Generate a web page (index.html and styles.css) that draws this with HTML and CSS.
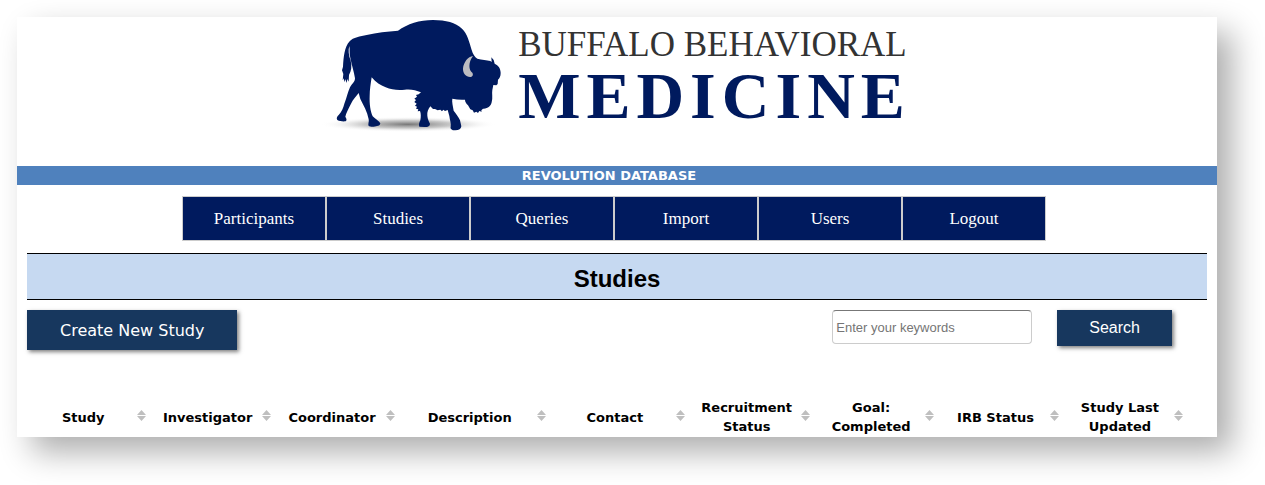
FILE: index.html
```html
<!DOCTYPE html>
<html lang="en">
<head>
    <meta charset="UTF-8">
    <meta name="viewport" content="width=device-width, initial-scale=1.0">
    <title>Revolution Database - Studies</title>
    <link rel="stylesheet" href="styles.css">
</head>
<body>
    <div class="page">
        <header class="logo">
            <svg class="bison" viewBox="0 21 600 360" aria-hidden="true">
                <defs>
                    <radialGradient id="ground">
                        <stop offset="0" stop-color="#777"/>
                        <stop offset="0.5" stop-color="#bbb" stop-opacity="0.8"/>
                        <stop offset="1" stop-color="#fff" stop-opacity="0"/>
                    </radialGradient>
                </defs>
                <ellipse cx="270" cy="343" rx="265" ry="23" fill="url(#ground)"/>
                <path fill="#001a5e" d="M240 62 C268 42 305 30 345 30 C385 30 412 38 432 56 C448 71 454 96 461 120 C465 133 470 141 478 146 C492 149 506 150 517 153 L521 156 L520 142 L527 150 L530 161 C541 166 548 175 548 189 C548 199 545 205 540 209 L539 222 L535 226 L526 225 L523 240 C521 251 525 263 521 277 C519 288 509 297 495 296 L490 301 L491 305 L484 303 L480 309 L475 305 L468 308 L464 301 L457 298 L450 286 C444 280 441 275 441 269 C429 270 415 269 403 266 C401 275 405 289 407 302 C415 313 422 321 426 331 L430 349 C429 357 423 361 412 361 C401 361 396 356 398 350 C400 341 395 329 394 318 L389 300 L381 303 L376 299 L372 304 L367 299 L359 301 L351 297 L345 297 L337 289 C330 298 327 306 328 317 C329 327 333 335 336 341 C336 348 331 351 320 351 L304 350 C301 344 304 337 307 331 C309 321 309 310 306 303 L299 304 L301 298 L294 296 L297 290 L291 287 L296 281 L289 276 L294 270 L289 266 L297 260 L294 255 L302 253 L309 247 C294 240 278 237 260 239 C239 241 220 239 203 232 C187 226 174 217 161 202 C158 222 155 239 155 258 C154 281 157 304 164 319 C171 327 183 332 187 340 C186 346 183 348 177 348 C170 351 157 351 152 348 C149 343 154 335 152 328 C148 305 136 285 127 267 L122 249 C113 260 105 269 99 281 C91 297 84 309 82 320 C86 326 87 330 83 334 C75 335 65 334 58 330 C54 325 58 319 62 315 C71 304 76 294 79 281 C87 262 89 246 96 232 C102 220 111 217 111 205 C108 184 101 166 97 144 C93 130 96 117 94 108 C90 120 92 136 98 152 C102 169 100 182 93 195 L92 215 L88 207 L86 219 L82 208 L78 217 L78 205 L74 211 L76 192 L72 181 L75 170 C77 141 79 111 95 94 C105 82 127 79 146 75 C177 68 207 64 240 62 Z"/>
                <path fill="#bcbcc0" d="M465 138 C450 139 437 157 435 175 C434 190 444 201 456 201 C463 201 467 195 463 188 C452 181 450 158 465 138 Z"/>
            </svg>
            <div class="logo-text">
                <span class="logo-top">BUFFALO BEHAVIORAL</span>
                <span class="logo-bottom">MEDICINE</span>
            </div>
        </header>

        <div class="banner">REVOLUTION DATABASE</div>

        <nav class="menu">
            <a href="#">Participants</a>
            <a href="#">Studies</a>
            <a href="#">Queries</a>
            <a href="#">Import</a>
            <a href="#">Users</a>
            <a href="#">Logout</a>
        </nav>

        <main class="content">
            <h1>Studies</h1>

            <div class="toolbar">
                <button type="button" class="btn btn-create">Create New Study</button>
                <form class="search">
                    <input type="text" class="keywords" placeholder="Enter your keywords" aria-label="Keywords">
                    <button type="submit" class="btn btn-search">Search</button>
                </form>
            </div>

            <svg width="0" height="0" class="sprite" aria-hidden="true">
                <symbol id="sort" viewBox="0 0 9 11">
                    <path d="M4.5 0 L9 5 H0 Z M0 6 H9 L4.5 11 Z"/>
                </symbol>
            </svg>

            <table class="studies">
                <colgroup>
                    <col span="3">
                    <col class="col-description">
                    <col class="col-contact">
                    <col span="4">
                </colgroup>
                <thead>
                    <tr>
                        <th><div class="head"><span>Study</span><svg><use href="#sort"/></svg></div></th>
                        <th><div class="head"><span>Investigator</span><svg><use href="#sort"/></svg></div></th>
                        <th><div class="head"><span>Coordinator</span><svg><use href="#sort"/></svg></div></th>
                        <th><div class="head"><span>Description</span><svg><use href="#sort"/></svg></div></th>
                        <th><div class="head"><span>Contact</span><svg><use href="#sort"/></svg></div></th>
                        <th><div class="head"><span>Recruitment Status</span><svg><use href="#sort"/></svg></div></th>
                        <th><div class="head"><span>Goal: Completed</span><svg><use href="#sort"/></svg></div></th>
                        <th><div class="head"><span>IRB Status</span><svg><use href="#sort"/></svg></div></th>
                        <th><div class="head"><span>Study Last Updated</span><svg><use href="#sort"/></svg></div></th>
                    </tr>
                </thead>
            </table>
        </main>
    </div>
</body>
</html>
```
FILE: styles.css
```css
* {
    box-sizing: border-box;
}
body {
    margin: 0;
    padding: 17px 48px 48px 17px;
    background: #fff;
    color: #000;
    font-family: "DejaVu Sans", Verdana, sans-serif;
    font-size: 13px;
}
.page {
    padding-bottom: 1px;
    background: #fff;
    box-shadow: 15px 15px 30px rgba(0, 0, 0, 0.32);
}

/* logo */
.logo {
    display: flex;
    justify-content: center;
    padding: 0 5px 29px 0;
}
.bison {
    width: 200px;
    height: 120px;
}
.logo-text {
    display: flex;
    flex-direction: column;
    padding-top: 9px;
    font-family: "Liberation Serif", "Times New Roman", serif;
}
.logo-top {
    font-size: 35px;
    line-height: 38px;
    color: #333;
}
.logo-bottom {
    font-size: 66px;
    line-height: 64px;
    font-weight: bold;
    letter-spacing: 6px;
    color: #001a5e;
}

.banner {
    padding-right: 16px;
    background: #4f81bd;
    color: #fff;
    font-weight: bold;
    line-height: 19px;
    text-align: center;
}

/* main menu */
.menu {
    display: flex;
    justify-content: center;
    padding: 11px 6px 12px 0;
}
.menu a {
    width: 144px;
    border: 1px solid #ccc;
    background: #001a5e;
    color: #fff;
    font-family: "Liberation Serif", "Times New Roman", serif;
    font-size: 17px;
    line-height: 43px;
    text-align: center;
    text-decoration: none;
}

.content {
    padding: 0 10px;
}
h1 {
    margin: 0 0 10px;
    padding-top: 5px;
    border-top: 1px solid #000;
    border-bottom: 1px solid #000;
    background: #c6d9f1;
    font-family: "Liberation Sans", Arial, sans-serif;
    font-size: 24px;
    line-height: 40px;
    text-align: center;
}

/* toolbar */
.toolbar {
    display: flex;
    justify-content: space-between;
    margin-bottom: 48px;
    padding-right: 35px;
}
.search {
    display: flex;
    align-items: flex-start;
    gap: 25px;
}
.btn {
    padding: 0 32px;
    border: 0;
    background: #17375e;
    color: #fff;
    font-size: 16px;
    box-shadow: 2px 2px 4px rgba(0, 0, 0, 0.5);
    cursor: pointer;
}
.btn-create {
    height: 40px;
    padding: 0 33px;
    font-family: "DejaVu Sans", Verdana, sans-serif;
}
.btn-search {
    height: 36px;
    font-family: "Liberation Sans", Arial, sans-serif;
}
.keywords {
    width: 200px;
    height: 34px;
    padding: 0 3px;
    border: 1px solid #ccc;
    border-top-color: #777;
    border-radius: 4px;
    font-family: "Liberation Sans", Arial, sans-serif;
    font-size: 13px;
}
.keywords::placeholder {
    color: #757575;
}

/* studies table */
.sprite {
    display: block;
}
.studies {
    width: 98.4%;
    table-layout: fixed;
    border-collapse: collapse;
}
.col-description {
    width: 13%;
}
.col-contact {
    width: 12%;
}
.studies th {
    padding: 0 5px 0 7px;
    line-height: 19px;
}
.head {
    display: flex;
    align-items: center;
    gap: 5px;
}
.head span {
    flex: 1;
}
.head svg {
    width: 9px;
    height: 11px;
    margin-bottom: 3px;
    fill: #bfbfbf;
}
```
